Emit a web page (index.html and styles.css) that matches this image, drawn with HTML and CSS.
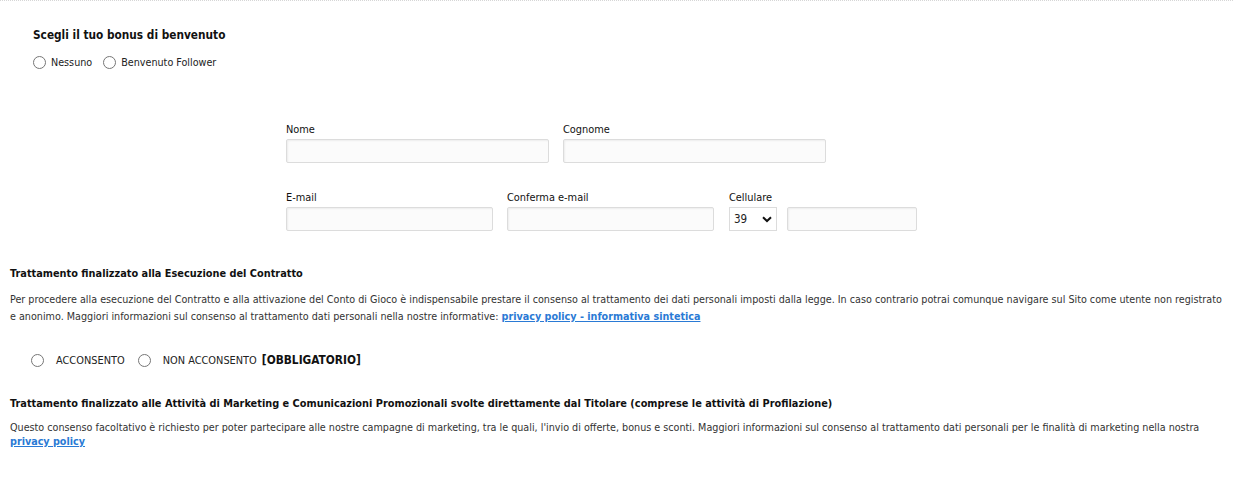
FILE: index.html
```html
<!DOCTYPE HTML>
<html>
<head>
<title>Registrazione</title>
<link rel="stylesheet" href="styles.css">
</head>
<body>
<div class="page">

  <div class="bonus">
    <h3 class="bonus-title">Scegli il tuo bonus di benvenuto</h3>
    <div class="bonus-options">
      <label class="opt"><input type="radio" name="bonus"> Nessuno</label>
      <label class="opt"><input type="radio" name="bonus"> Benvenuto Follower</label>
    </div>
  </div>

  <div class="fields">
    <div class="row row-name">
      <div class="field"><label>Nome</label><input class="box" type="text"></div>
      <div class="field"><label>Cognome</label><input class="box" type="text"></div>
    </div>
    <div class="row row-contact">
      <div class="field"><label>E-mail</label><input class="box" type="text"></div>
      <div class="field"><label>Conferma e-mail</label><input class="box" type="text"></div>
      <div class="field">
        <label>Cellulare</label>
        <div class="phone">
          <div class="prefix">
            <select><option>39</option></select>
            <svg class="chevron" width="10" height="7" viewBox="0 0 10 7"><path d="M1 1.2 L5 5 L9 1.2" fill="none" stroke="#111" stroke-width="2"/></svg>
          </div>
          <input class="box" type="text">
        </div>
      </div>
    </div>
  </div>

  <div class="consent">
    <h4 class="consent-title">Trattamento finalizzato alla Esecuzione del Contratto</h4>
    <p class="consent-text tall">Per procedere alla esecuzione del Contratto e alla attivazione del Conto di Gioco è indispensabile prestare il consenso al trattamento dei dati personali imposti dalla legge. In caso contrario potrai comunque navigare sul Sito come utente non registrato e anonimo. Maggiori informazioni sul consenso al trattamento dati personali nella nostre informative: <a href="#">privacy policy - informativa sintetica</a></p>
    <div class="consent-options">
      <label class="copt"><input type="radio" name="contratto"> ACCONSENTO</label>
      <label class="copt"><input type="radio" name="contratto"> NON ACCONSENTO <b>[OBBLIGATORIO]</b></label>
    </div>
  </div>

  <div class="consent">
    <h4 class="consent-title">Trattamento finalizzato alle Attività di Marketing e Comunicazioni Promozionali svolte direttamente dal Titolare (comprese le attività di Profilazione)</h4>
    <p class="consent-text">Questo consenso facoltativo è richiesto per poter partecipare alle nostre campagne di marketing, tra le quali, l'invio di offerte, bonus e sconti. Maggiori informazioni sul consenso al trattamento dati personali per le finalità di marketing nella nostra <a href="#">privacy policy</a></p>
  </div>

</div>
</body>
</html>
```

FILE: styles.css
```css
body {margin: 0; font-family: "DejaVu Sans Condensed", "DejaVu Sans", sans-serif; font-size: 10.7px; color: #222; background: #fff;}
.page {border-top: 1px dotted #d6d6d6; padding-bottom: 30px;}

.bonus {padding: 27px 0 0 33px;}
.bonus-title {margin: 0; font-size: 11.75px; font-weight: bold; color: #111;}
.bonus-options {display: flex; gap: 11px; margin-top: 14px; font-size: 10.7px;}
.opt {display: flex; align-items: center; gap: 5px;}
.opt input {margin: 0; width: 13px; height: 13px;}

.fields {width: 640px; margin: 54px 0 0 286px;}
.row {display: flex; gap: 14px;}
.row-contact {margin-top: 28px;}
.field {display: flex; flex-direction: column;}
.field label {font-size: 10.9px; line-height: 14px; margin-bottom: 2px; color: #111;}
.box {box-sizing: border-box; height: 24px; border: 1px solid #dcdcdc; border-radius: 2px; background: #fbfbfb; box-shadow: inset 1px 1px 2px rgba(0,0,0,0.06); margin: 0; padding: 0 4px;}
.row-name .box {width: 263px;}
.row-contact .field:nth-child(1) .box, .row-contact .field:nth-child(2) .box {width: 207px;}
.row-contact .field:nth-child(3) {margin-left: 1px;}
.phone {display: flex; gap: 10px;}
.phone .box {width: 130px;}
.prefix {position: relative; width: 48px; height: 24px;}
.prefix select {appearance: none; -webkit-appearance: none; box-sizing: border-box; width: 48px; height: 24px; border: 1px solid #dcdcdc; background: #fff; font-family: "DejaVu Sans Condensed", sans-serif; font-size: 11.5px; color: #222; padding: 0 0 0 4px; margin: 0; border-radius: 0;}
.chevron {position: absolute; right: 5px; top: 9px; pointer-events: none;}

.consent {padding: 0 10px;}
.consent-title {margin: 36px 0 0; font-size: 10.87px; font-weight: bold; color: #111;}
.consent-text {margin: 11px 0 0; line-height: 14px; color: #333;}
.consent-text.tall {line-height: 17px; margin-top: 11px;}
.consent-text a {color: #2a7ad5; font-weight: bold;}
.consent-options {display: flex; align-items: center; gap: 13px; margin: 28px 0 0 21px; font-size: 10.9px;}
.copt {display: flex; align-items: center; gap: 12px;}
.copt input {margin: 0; width: 13px; height: 13px;}
.copt b {margin-left: -7px; font-size: 11.8px; color: #111;}
.consent + .consent .consent-title {margin-top: 30px;}
```
